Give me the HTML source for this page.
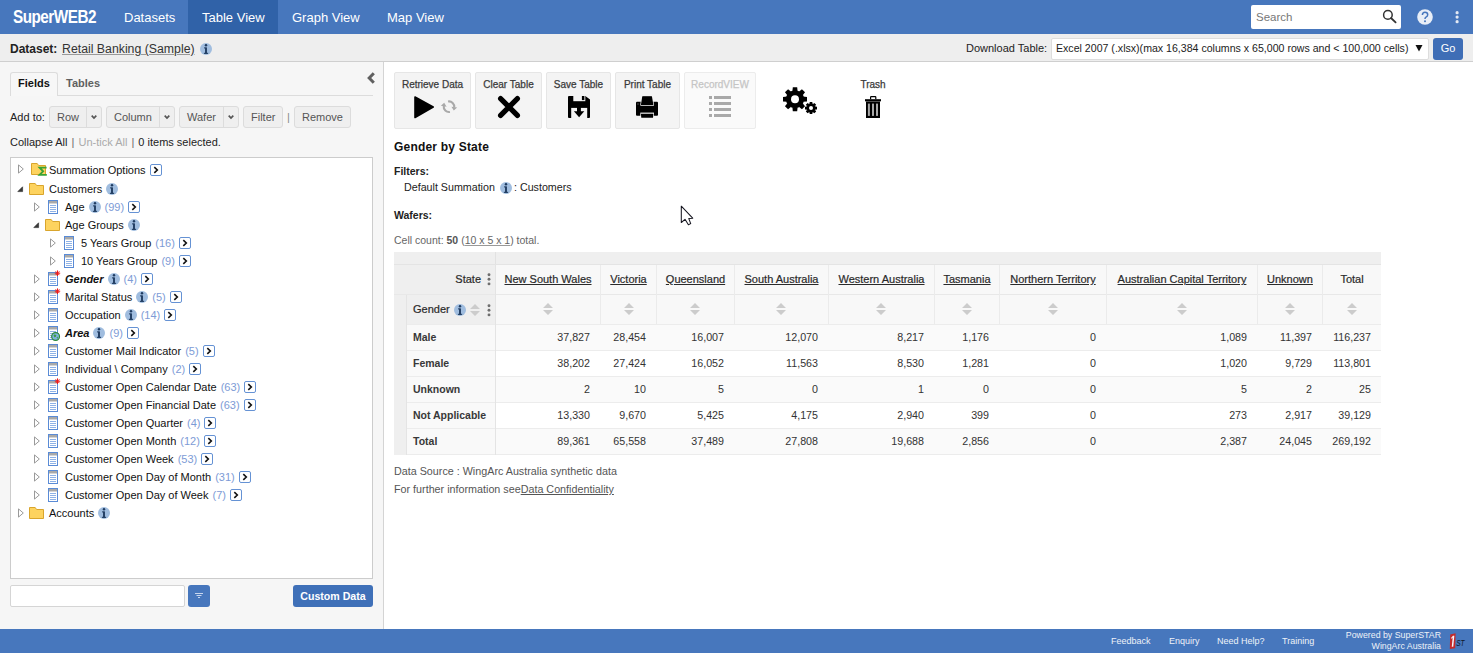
<!DOCTYPE html>
<html><head><meta charset="utf-8">
<style>
*{box-sizing:border-box;margin:0;padding:0}
html,body{width:1473px;height:653px;overflow:hidden;background:#fff;font-family:"Liberation Sans",sans-serif;color:#222}
.abs{position:absolute}
svg{overflow:visible}
#hdr{position:absolute;left:0;top:0;width:1473px;height:34px;background:#4777bd}
#hdr .logo{position:absolute;left:13px;top:7px;font-weight:bold;font-size:18px;color:#fff;letter-spacing:-0.6px;transform:scaleX(0.85);transform-origin:left}
#hdr .nav{position:absolute;top:10px;font-size:13px;color:#fff;white-space:nowrap}
#hdr .act{position:absolute;left:188px;top:0;width:90px;height:34px;background:#3062a8}
#search{position:absolute;left:1251px;top:5px;width:150px;height:24px;background:#fff;border-radius:2px}
#search span{position:absolute;left:5px;top:6px;font-size:11.5px;color:#777}
#dsbar{position:absolute;left:0;top:34px;width:1473px;height:28px;background:#eeeeee;border-bottom:1px solid #cfcfcf}
#dsbar .t{position:absolute;top:7px;font-size:12px;white-space:nowrap}
#left{position:absolute;left:0;top:62px;width:384px;height:567px;background:#f6f6f6;border-right:1px solid #d4d4d4}
#right{position:absolute;left:384px;top:62px;width:1089px;height:567px;background:#fff}
#foot{position:absolute;left:0;top:629px;width:1473px;height:24px;background:#4777bd}
.btn{position:absolute;height:22px;background:#efefef;border:1px solid #dcdcdc;border-radius:3px;font-size:11px;color:#555;line-height:21px}
.tree{position:absolute;left:10px;top:157px;width:363px;height:422px;background:#fff;border:1px solid #cccccc}
.row{position:absolute;height:18px;line-height:18px;font-size:11px;white-space:nowrap;color:#111}
.tbtn{position:absolute;top:72px;height:57px;background:#f4f4f4;border:1px solid #e6e6e6;border-radius:2px}
.tbtn.dis{background:#fafafa;border-color:#ececec}
.tl{position:absolute;left:0;right:0;top:6px;text-align:center;font-size:10px;color:#3a3a3a;white-space:nowrap;-webkit-text-stroke:0.25px currentColor}
.dis .tl{color:#c5c5c5}
.th{height:29px;line-height:29px;font-size:11px;color:#2a2a2a;white-space:nowrap;-webkit-text-stroke:0.2px currentColor}
.td{height:25px;line-height:25px;font-size:10.7px;color:#333;white-space:nowrap}
.lab{color:#383838;font-weight:bold;font-size:10.5px}
.kebab{width:4px;height:13px}
.sort{width:10px;height:12px;background:#0000}
.fl{top:7px;font-size:9px;color:#eef2f8;white-space:nowrap}
.cnt{color:#7d9bd6;margin-left:4px}
.info{display:inline-block;width:12px;height:12px;margin-left:4px;vertical-align:-2px}
.info svg{display:block}
.arr{display:inline-block;width:12px;height:12px;margin-left:4px;vertical-align:-2px}
.arr svg{display:block}
.split{position:absolute;top:0;width:1px;height:20px;background:#dcdcdc}
.chev{position:absolute;top:8px;width:6px;height:4px;background:none}
</style></head>
<body>
<div id="hdr">
  <div class="logo">SuperWEB2</div>
  <div class="act"></div>
  <div class="nav" style="left:124px">Datasets</div>
  <div class="nav" style="left:202px">Table View</div>
  <div class="nav" style="left:292px">Graph View</div>
  <div class="nav" style="left:387px">Map View</div>
  <div id="search"><span>Search</span></div>
  <svg class="abs" style="left:1382px;top:10px" width="16" height="16" viewBox="0 0 16 16"><circle cx="5.9" cy="4.9" r="4.3" fill="none" stroke="#333" stroke-width="1.5"/><path d="M9 8 L13.6 12.4" stroke="#333" stroke-width="1.8" stroke-linecap="round"/></svg>
  <svg class="abs" style="left:1417px;top:9px" width="16" height="16" viewBox="0 0 16 16"><circle cx="8" cy="8" r="7.8" fill="#e8eef7"/><path d="M5.4 6 Q5.4 3.3 8 3.3 Q10.7 3.3 10.7 5.8 Q10.7 7.3 9 8.2 Q8 8.8 8 10" fill="none" stroke="#4777bd" stroke-width="1.5"/><circle cx="8" cy="12.3" r="1" fill="#4777bd"/></svg>
  <svg class="abs" style="left:1455px;top:10px" width="5" height="15" viewBox="0 0 5 15"><circle cx="2.1" cy="2.7" r="1.6" fill="#e4eaf4"/><circle cx="2.1" cy="7.1" r="1.6" fill="#e4eaf4"/><circle cx="2.1" cy="11.7" r="1.6" fill="#e4eaf4"/></svg>

</div>
<div id="dsbar">
  <div class="t" style="left:10px;top:8px;font-weight:bold">Dataset:</div>
  <div class="t" style="left:62px;top:8px;font-size:12.3px;color:#333;text-decoration:underline;text-decoration-color:#999">Retail Banking (Sample)</div>
  <div class="t" style="left:966px;top:8px;font-size:11px;color:#222">Download Table:</div>
  <svg class="abs" style="left:200px;top:9px" width="12" height="12" viewBox="0 0 12 12"><circle cx="6" cy="6" r="6" fill="#a0bddf"/><rect x="5.05" y="4.4" width="1.9" height="6" fill="#1f3b60"/><rect x="3.9" y="9.8" width="4.2" height="1.1" fill="#1f3b60"/><rect x="4.0" y="4.4" width="1.5" height="1" fill="#1f3b60"/><circle cx="6" cy="2.3" r="1.2" fill="#1f3b60"/></svg>
  <div class="abs" style="left:1051px;top:4px;width:378px;height:22px;background:#fff;border:1px solid #dddddd;border-radius:2px"></div>
  <div class="t" style="left:1056px;top:8px;font-size:10.6px;color:#222">Excel 2007 (.xlsx)(max 16,384 columns x 65,000 rows and &lt; 100,000 cells)</div>
  <svg class="abs" style="left:1415px;top:10px" width="8" height="8" viewBox="0 0 8 8"><path d="M0.5 1 L7.5 1 L4 7.5 Z" fill="#111"/></svg>
  <div class="abs" style="left:1433px;top:4px;width:30px;height:22px;background:#3f6eb6;border-radius:3px;color:#fff;font-size:11px;line-height:21px;text-align:center">Go</div>

</div>
<div id="left">
  <div class="abs" style="left:10px;top:10px;width:48px;height:24px;border:1px solid #dcdcdc;border-bottom:none;border-radius:3px 3px 0 0;background:#f7f7f7"></div>
  <div class="abs" style="left:57px;top:33px;width:316px;height:1px;background:#dcdcdc"></div>
  
  <div class="abs" style="left:18px;top:15px;font-size:11px;font-weight:bold;color:#111">Fields</div>
  <div class="abs" style="left:66px;top:15px;font-size:11px;font-weight:bold;color:#606060">Tables</div>
  <svg class="abs" style="left:367px;top:10px" width="9" height="12" viewBox="0 0 9 12"><path d="M6.8 1.3 L2.2 6 L6.8 10.7" fill="none" stroke="#606060" stroke-width="3"/></svg>
  <div class="abs" style="left:10px;top:49px;font-size:11px;color:#222">Add to:</div>
  <div class="btn" style="left:49px;top:44px;width:53px"><span style="position:absolute;left:7px">Row</span><span class="split" style="left:36px"></span><svg class="chev" style="left:41px" width="6" height="4" viewBox="0 0 6 4"><path d="M0.7 0.7 L3 3 L5.3 0.7" fill="none" stroke="#555" stroke-width="1.7"/></svg></div>
  <div class="btn" style="left:106px;top:44px;width:69px"><span style="position:absolute;left:7px">Column</span><span class="split" style="left:52px"></span><svg class="chev" style="left:57px" width="6" height="4" viewBox="0 0 6 4"><path d="M0.7 0.7 L3 3 L5.3 0.7" fill="none" stroke="#555" stroke-width="1.7"/></svg></div>
  <div class="btn" style="left:179px;top:44px;width:60px"><span style="position:absolute;left:7px">Wafer</span><span class="split" style="left:43px"></span><svg class="chev" style="left:48px" width="6" height="4" viewBox="0 0 6 4"><path d="M0.7 0.7 L3 3 L5.3 0.7" fill="none" stroke="#555" stroke-width="1.7"/></svg></div>
  <div class="btn" style="left:243px;top:44px;width:40px"><span style="position:absolute;left:7px">Filter</span></div>
  <div class="abs" style="left:287px;top:49px;font-size:11px;color:#888">|</div>
  <div class="btn" style="left:294px;top:44px;width:57px"><span style="position:absolute;left:7px">Remove</span></div>
  <div class="abs" style="left:10px;top:74px;font-size:11px;color:#222;white-space:nowrap">Collapse All <span style="color:#666;margin:0 1px">|</span> <span style="color:#aaa">Un-tick All</span> <span style="color:#666;margin:0 1px">|</span> 0 items selected.</div>
  <div class="tree" style="top:95px"></div>
<svg class="abs" style="left:18px;top:102px" width="7" height="10" viewBox="0 0 7 10"><path d="M0.5 0.9 L5.3 5 L0.5 9.1 Z" fill="none" stroke="#9a9a9a" stroke-width="1"/></svg>
<svg class="abs" style="left:31px;top:101px" width="17" height="14" viewBox="0 0 17 14"><path d="M0.5 0.5 L6.2 0.5 L7.6 2.5 L14.5 2.5 L14.5 11.5 L0.5 11.5 Z" fill="#fdd35f" stroke="#d9a52c" stroke-width="1"/><path d="M15.6 4.6 H8.6 L12.1 8.3 L8.6 11.9 H15.8" fill="none" stroke="#3aa335" stroke-width="1.9"/></svg>
<div class="row" style="left:49px;top:99px"><span>Summation Options</span><span class="arr"><svg width="12" height="12" viewBox="0 0 12 12"><rect x="0.5" y="0.5" width="11" height="11" rx="1.5" fill="#fff" stroke="#6592d4"/><path d="M4.3 3.2 L7.3 6 L4.3 8.8" fill="none" stroke="#111" stroke-width="1.6"/></svg></span></div>
<svg class="abs" style="left:17px;top:124px" width="7" height="7" viewBox="0 0 7 7"><path d="M5.6 0.8 L5.6 5.6 L0.8 5.6 Z" fill="#383838" stroke="#383838" stroke-width="0.7" stroke-linejoin="round"/></svg>
<svg class="abs" style="left:29px;top:121px" width="17" height="14" viewBox="0 0 17 14"><path d="M0.5 0.5 L6.2 0.5 L7.6 2.5 L14.5 2.5 L14.5 11.5 L0.5 11.5 Z" fill="#fdd35f" stroke="#d9a52c" stroke-width="1"/></svg>
<div class="row" style="left:49px;top:118px"><span>Customers</span><span class="info"><svg width="12" height="12" viewBox="0 0 12 12"><circle cx="6" cy="6" r="6" fill="#a0bddf"/><rect x="5.05" y="4.4" width="1.9" height="6" fill="#1f3b60"/><rect x="3.9" y="9.8" width="4.2" height="1.1" fill="#1f3b60"/><rect x="4.0" y="4.4" width="1.5" height="1" fill="#1f3b60"/><circle cx="6" cy="2.3" r="1.2" fill="#1f3b60"/></svg></span></div>
<svg class="abs" style="left:34px;top:140px" width="7" height="10" viewBox="0 0 7 10"><path d="M0.5 0.9 L5.3 5 L0.5 9.1 Z" fill="none" stroke="#9a9a9a" stroke-width="1"/></svg>
<svg class="abs" style="left:48px;top:138px" width="13" height="15" viewBox="0 0 13 15"><rect x="0.5" y="0.5" width="9" height="13" fill="#fff" stroke="#5a8bd6"/><rect x="1" y="1" width="8" height="2.5" fill="#a9a9a9"/><path d="M2 5.5H8M2 7.5H8M2 9.5H8M2 11.5H8" stroke="#8fb2e6" stroke-width="1"/></svg>
<div class="row" style="left:65px;top:136px"><span>Age</span><span class="info"><svg width="12" height="12" viewBox="0 0 12 12"><circle cx="6" cy="6" r="6" fill="#a0bddf"/><rect x="5.05" y="4.4" width="1.9" height="6" fill="#1f3b60"/><rect x="3.9" y="9.8" width="4.2" height="1.1" fill="#1f3b60"/><rect x="4.0" y="4.4" width="1.5" height="1" fill="#1f3b60"/><circle cx="6" cy="2.3" r="1.2" fill="#1f3b60"/></svg></span><span class="cnt">(99)</span><span class="arr"><svg width="12" height="12" viewBox="0 0 12 12"><rect x="0.5" y="0.5" width="11" height="11" rx="1.5" fill="#fff" stroke="#6592d4"/><path d="M4.3 3.2 L7.3 6 L4.3 8.8" fill="none" stroke="#111" stroke-width="1.6"/></svg></span></div>
<svg class="abs" style="left:33px;top:160px" width="7" height="7" viewBox="0 0 7 7"><path d="M5.6 0.8 L5.6 5.6 L0.8 5.6 Z" fill="#383838" stroke="#383838" stroke-width="0.7" stroke-linejoin="round"/></svg>
<svg class="abs" style="left:45px;top:157px" width="17" height="14" viewBox="0 0 17 14"><path d="M0.5 0.5 L6.2 0.5 L7.6 2.5 L14.5 2.5 L14.5 11.5 L0.5 11.5 Z" fill="#fdd35f" stroke="#d9a52c" stroke-width="1"/></svg>
<div class="row" style="left:65px;top:154px"><span>Age Groups</span><span class="info"><svg width="12" height="12" viewBox="0 0 12 12"><circle cx="6" cy="6" r="6" fill="#a0bddf"/><rect x="5.05" y="4.4" width="1.9" height="6" fill="#1f3b60"/><rect x="3.9" y="9.8" width="4.2" height="1.1" fill="#1f3b60"/><rect x="4.0" y="4.4" width="1.5" height="1" fill="#1f3b60"/><circle cx="6" cy="2.3" r="1.2" fill="#1f3b60"/></svg></span></div>
<svg class="abs" style="left:50px;top:176px" width="7" height="10" viewBox="0 0 7 10"><path d="M0.5 0.9 L5.3 5 L0.5 9.1 Z" fill="none" stroke="#9a9a9a" stroke-width="1"/></svg>
<svg class="abs" style="left:64px;top:174px" width="13" height="15" viewBox="0 0 13 15"><rect x="0.5" y="0.5" width="9" height="13" fill="#fff" stroke="#5a8bd6"/><rect x="1" y="1" width="8" height="2.5" fill="#a9a9a9"/><path d="M2 5.5H8M2 7.5H8M2 9.5H8M2 11.5H8" stroke="#8fb2e6" stroke-width="1"/></svg>
<div class="row" style="left:81px;top:172px"><span>5 Years Group</span><span class="cnt">(16)</span><span class="arr"><svg width="12" height="12" viewBox="0 0 12 12"><rect x="0.5" y="0.5" width="11" height="11" rx="1.5" fill="#fff" stroke="#6592d4"/><path d="M4.3 3.2 L7.3 6 L4.3 8.8" fill="none" stroke="#111" stroke-width="1.6"/></svg></span></div>
<svg class="abs" style="left:50px;top:194px" width="7" height="10" viewBox="0 0 7 10"><path d="M0.5 0.9 L5.3 5 L0.5 9.1 Z" fill="none" stroke="#9a9a9a" stroke-width="1"/></svg>
<svg class="abs" style="left:64px;top:192px" width="13" height="15" viewBox="0 0 13 15"><rect x="0.5" y="0.5" width="9" height="13" fill="#fff" stroke="#5a8bd6"/><rect x="1" y="1" width="8" height="2.5" fill="#a9a9a9"/><path d="M2 5.5H8M2 7.5H8M2 9.5H8M2 11.5H8" stroke="#8fb2e6" stroke-width="1"/></svg>
<div class="row" style="left:81px;top:190px"><span>10 Years Group</span><span class="cnt">(9)</span><span class="arr"><svg width="12" height="12" viewBox="0 0 12 12"><rect x="0.5" y="0.5" width="11" height="11" rx="1.5" fill="#fff" stroke="#6592d4"/><path d="M4.3 3.2 L7.3 6 L4.3 8.8" fill="none" stroke="#111" stroke-width="1.6"/></svg></span></div>
<svg class="abs" style="left:34px;top:212px" width="7" height="10" viewBox="0 0 7 10"><path d="M0.5 0.9 L5.3 5 L0.5 9.1 Z" fill="none" stroke="#9a9a9a" stroke-width="1"/></svg>
<svg class="abs" style="left:48px;top:210px" width="13" height="15" viewBox="0 0 13 15"><rect x="0.5" y="0.5" width="9" height="13" fill="#fff" stroke="#5a8bd6"/><rect x="1" y="1" width="8" height="2.5" fill="#a9a9a9"/><path d="M2 5.5H8M2 7.5H8M2 9.5H8M2 11.5H8" stroke="#8fb2e6" stroke-width="1"/><g transform="translate(0,0)"><path d="M9.5 -1.6 V4 M6.8 1.2 H12.2 M7.6 -0.7 L11.4 3.1 M11.4 -0.7 L7.6 3.1" stroke="#f01818" stroke-width="1"/></g></svg>
<div class="row" style="left:65px;top:208px"><span style="font-weight:bold;font-style:italic">Gender</span><span class="info"><svg width="12" height="12" viewBox="0 0 12 12"><circle cx="6" cy="6" r="6" fill="#a0bddf"/><rect x="5.05" y="4.4" width="1.9" height="6" fill="#1f3b60"/><rect x="3.9" y="9.8" width="4.2" height="1.1" fill="#1f3b60"/><rect x="4.0" y="4.4" width="1.5" height="1" fill="#1f3b60"/><circle cx="6" cy="2.3" r="1.2" fill="#1f3b60"/></svg></span><span class="cnt">(4)</span><span class="arr"><svg width="12" height="12" viewBox="0 0 12 12"><rect x="0.5" y="0.5" width="11" height="11" rx="1.5" fill="#fff" stroke="#6592d4"/><path d="M4.3 3.2 L7.3 6 L4.3 8.8" fill="none" stroke="#111" stroke-width="1.6"/></svg></span></div>
<svg class="abs" style="left:34px;top:230px" width="7" height="10" viewBox="0 0 7 10"><path d="M0.5 0.9 L5.3 5 L0.5 9.1 Z" fill="none" stroke="#9a9a9a" stroke-width="1"/></svg>
<svg class="abs" style="left:48px;top:228px" width="13" height="15" viewBox="0 0 13 15"><rect x="0.5" y="0.5" width="9" height="13" fill="#fff" stroke="#5a8bd6"/><rect x="1" y="1" width="8" height="2.5" fill="#a9a9a9"/><path d="M2 5.5H8M2 7.5H8M2 9.5H8M2 11.5H8" stroke="#8fb2e6" stroke-width="1"/><g transform="translate(0,0)"><path d="M9.5 -1.6 V4 M6.8 1.2 H12.2 M7.6 -0.7 L11.4 3.1 M11.4 -0.7 L7.6 3.1" stroke="#f01818" stroke-width="1"/></g></svg>
<div class="row" style="left:65px;top:226px"><span>Marital Status</span><span class="info"><svg width="12" height="12" viewBox="0 0 12 12"><circle cx="6" cy="6" r="6" fill="#a0bddf"/><rect x="5.05" y="4.4" width="1.9" height="6" fill="#1f3b60"/><rect x="3.9" y="9.8" width="4.2" height="1.1" fill="#1f3b60"/><rect x="4.0" y="4.4" width="1.5" height="1" fill="#1f3b60"/><circle cx="6" cy="2.3" r="1.2" fill="#1f3b60"/></svg></span><span class="cnt">(5)</span><span class="arr"><svg width="12" height="12" viewBox="0 0 12 12"><rect x="0.5" y="0.5" width="11" height="11" rx="1.5" fill="#fff" stroke="#6592d4"/><path d="M4.3 3.2 L7.3 6 L4.3 8.8" fill="none" stroke="#111" stroke-width="1.6"/></svg></span></div>
<svg class="abs" style="left:34px;top:248px" width="7" height="10" viewBox="0 0 7 10"><path d="M0.5 0.9 L5.3 5 L0.5 9.1 Z" fill="none" stroke="#9a9a9a" stroke-width="1"/></svg>
<svg class="abs" style="left:48px;top:246px" width="13" height="15" viewBox="0 0 13 15"><rect x="0.5" y="0.5" width="9" height="13" fill="#fff" stroke="#5a8bd6"/><rect x="1" y="1" width="8" height="2.5" fill="#a9a9a9"/><path d="M2 5.5H8M2 7.5H8M2 9.5H8M2 11.5H8" stroke="#8fb2e6" stroke-width="1"/></svg>
<div class="row" style="left:65px;top:244px"><span>Occupation</span><span class="info"><svg width="12" height="12" viewBox="0 0 12 12"><circle cx="6" cy="6" r="6" fill="#a0bddf"/><rect x="5.05" y="4.4" width="1.9" height="6" fill="#1f3b60"/><rect x="3.9" y="9.8" width="4.2" height="1.1" fill="#1f3b60"/><rect x="4.0" y="4.4" width="1.5" height="1" fill="#1f3b60"/><circle cx="6" cy="2.3" r="1.2" fill="#1f3b60"/></svg></span><span class="cnt">(14)</span><span class="arr"><svg width="12" height="12" viewBox="0 0 12 12"><rect x="0.5" y="0.5" width="11" height="11" rx="1.5" fill="#fff" stroke="#6592d4"/><path d="M4.3 3.2 L7.3 6 L4.3 8.8" fill="none" stroke="#111" stroke-width="1.6"/></svg></span></div>
<svg class="abs" style="left:34px;top:266px" width="7" height="10" viewBox="0 0 7 10"><path d="M0.5 0.9 L5.3 5 L0.5 9.1 Z" fill="none" stroke="#9a9a9a" stroke-width="1"/></svg>
<svg class="abs" style="left:48px;top:264px" width="13" height="15" viewBox="0 0 13 15"><rect x="0.5" y="0.5" width="9" height="13" fill="#fff" stroke="#5a8bd6"/><rect x="1" y="1" width="8" height="2.5" fill="#a9a9a9"/><path d="M2 5.5H8M2 7.5H8M2 9.5H8M2 11.5H8" stroke="#8fb2e6" stroke-width="1"/><circle cx="7.6" cy="10.5" r="3.9" fill="#7fb2e0" stroke="#2a8a35" stroke-width="1.2"/><path d="M5.5 9 Q7 8 8.5 9.5 Q8 11 6.5 11.5 Z M8.5 11.5 L10 10.5 L9.5 13 Z" fill="#3a9a40"/></svg>
<div class="row" style="left:65px;top:262px"><span style="font-weight:bold;font-style:italic">Area</span><span class="info"><svg width="12" height="12" viewBox="0 0 12 12"><circle cx="6" cy="6" r="6" fill="#a0bddf"/><rect x="5.05" y="4.4" width="1.9" height="6" fill="#1f3b60"/><rect x="3.9" y="9.8" width="4.2" height="1.1" fill="#1f3b60"/><rect x="4.0" y="4.4" width="1.5" height="1" fill="#1f3b60"/><circle cx="6" cy="2.3" r="1.2" fill="#1f3b60"/></svg></span><span class="cnt">(9)</span><span class="arr"><svg width="12" height="12" viewBox="0 0 12 12"><rect x="0.5" y="0.5" width="11" height="11" rx="1.5" fill="#fff" stroke="#6592d4"/><path d="M4.3 3.2 L7.3 6 L4.3 8.8" fill="none" stroke="#111" stroke-width="1.6"/></svg></span></div>
<svg class="abs" style="left:34px;top:284px" width="7" height="10" viewBox="0 0 7 10"><path d="M0.5 0.9 L5.3 5 L0.5 9.1 Z" fill="none" stroke="#9a9a9a" stroke-width="1"/></svg>
<svg class="abs" style="left:48px;top:282px" width="13" height="15" viewBox="0 0 13 15"><rect x="0.5" y="0.5" width="9" height="13" fill="#fff" stroke="#5a8bd6"/><rect x="1" y="1" width="8" height="2.5" fill="#a9a9a9"/><path d="M2 5.5H8M2 7.5H8M2 9.5H8M2 11.5H8" stroke="#8fb2e6" stroke-width="1"/></svg>
<div class="row" style="left:65px;top:280px"><span>Customer Mail Indicator</span><span class="cnt">(5)</span><span class="arr"><svg width="12" height="12" viewBox="0 0 12 12"><rect x="0.5" y="0.5" width="11" height="11" rx="1.5" fill="#fff" stroke="#6592d4"/><path d="M4.3 3.2 L7.3 6 L4.3 8.8" fill="none" stroke="#111" stroke-width="1.6"/></svg></span></div>
<svg class="abs" style="left:34px;top:302px" width="7" height="10" viewBox="0 0 7 10"><path d="M0.5 0.9 L5.3 5 L0.5 9.1 Z" fill="none" stroke="#9a9a9a" stroke-width="1"/></svg>
<svg class="abs" style="left:48px;top:300px" width="13" height="15" viewBox="0 0 13 15"><rect x="0.5" y="0.5" width="9" height="13" fill="#fff" stroke="#5a8bd6"/><rect x="1" y="1" width="8" height="2.5" fill="#a9a9a9"/><path d="M2 5.5H8M2 7.5H8M2 9.5H8M2 11.5H8" stroke="#8fb2e6" stroke-width="1"/></svg>
<div class="row" style="left:65px;top:298px"><span>Individual \ Company</span><span class="cnt">(2)</span><span class="arr"><svg width="12" height="12" viewBox="0 0 12 12"><rect x="0.5" y="0.5" width="11" height="11" rx="1.5" fill="#fff" stroke="#6592d4"/><path d="M4.3 3.2 L7.3 6 L4.3 8.8" fill="none" stroke="#111" stroke-width="1.6"/></svg></span></div>
<svg class="abs" style="left:34px;top:320px" width="7" height="10" viewBox="0 0 7 10"><path d="M0.5 0.9 L5.3 5 L0.5 9.1 Z" fill="none" stroke="#9a9a9a" stroke-width="1"/></svg>
<svg class="abs" style="left:48px;top:318px" width="13" height="15" viewBox="0 0 13 15"><rect x="0.5" y="0.5" width="9" height="13" fill="#fff" stroke="#5a8bd6"/><rect x="1" y="1" width="8" height="2.5" fill="#a9a9a9"/><path d="M2 5.5H8M2 7.5H8M2 9.5H8M2 11.5H8" stroke="#8fb2e6" stroke-width="1"/><g transform="translate(0,0)"><path d="M9.5 -1.6 V4 M6.8 1.2 H12.2 M7.6 -0.7 L11.4 3.1 M11.4 -0.7 L7.6 3.1" stroke="#f01818" stroke-width="1"/></g></svg>
<div class="row" style="left:65px;top:316px"><span>Customer Open Calendar Date</span><span class="cnt">(63)</span><span class="arr"><svg width="12" height="12" viewBox="0 0 12 12"><rect x="0.5" y="0.5" width="11" height="11" rx="1.5" fill="#fff" stroke="#6592d4"/><path d="M4.3 3.2 L7.3 6 L4.3 8.8" fill="none" stroke="#111" stroke-width="1.6"/></svg></span></div>
<svg class="abs" style="left:34px;top:338px" width="7" height="10" viewBox="0 0 7 10"><path d="M0.5 0.9 L5.3 5 L0.5 9.1 Z" fill="none" stroke="#9a9a9a" stroke-width="1"/></svg>
<svg class="abs" style="left:48px;top:336px" width="13" height="15" viewBox="0 0 13 15"><rect x="0.5" y="0.5" width="9" height="13" fill="#fff" stroke="#5a8bd6"/><rect x="1" y="1" width="8" height="2.5" fill="#a9a9a9"/><path d="M2 5.5H8M2 7.5H8M2 9.5H8M2 11.5H8" stroke="#8fb2e6" stroke-width="1"/></svg>
<div class="row" style="left:65px;top:334px"><span>Customer Open Financial Date</span><span class="cnt">(63)</span><span class="arr"><svg width="12" height="12" viewBox="0 0 12 12"><rect x="0.5" y="0.5" width="11" height="11" rx="1.5" fill="#fff" stroke="#6592d4"/><path d="M4.3 3.2 L7.3 6 L4.3 8.8" fill="none" stroke="#111" stroke-width="1.6"/></svg></span></div>
<svg class="abs" style="left:34px;top:356px" width="7" height="10" viewBox="0 0 7 10"><path d="M0.5 0.9 L5.3 5 L0.5 9.1 Z" fill="none" stroke="#9a9a9a" stroke-width="1"/></svg>
<svg class="abs" style="left:48px;top:354px" width="13" height="15" viewBox="0 0 13 15"><rect x="0.5" y="0.5" width="9" height="13" fill="#fff" stroke="#5a8bd6"/><rect x="1" y="1" width="8" height="2.5" fill="#a9a9a9"/><path d="M2 5.5H8M2 7.5H8M2 9.5H8M2 11.5H8" stroke="#8fb2e6" stroke-width="1"/></svg>
<div class="row" style="left:65px;top:352px"><span>Customer Open Quarter</span><span class="cnt">(4)</span><span class="arr"><svg width="12" height="12" viewBox="0 0 12 12"><rect x="0.5" y="0.5" width="11" height="11" rx="1.5" fill="#fff" stroke="#6592d4"/><path d="M4.3 3.2 L7.3 6 L4.3 8.8" fill="none" stroke="#111" stroke-width="1.6"/></svg></span></div>
<svg class="abs" style="left:34px;top:374px" width="7" height="10" viewBox="0 0 7 10"><path d="M0.5 0.9 L5.3 5 L0.5 9.1 Z" fill="none" stroke="#9a9a9a" stroke-width="1"/></svg>
<svg class="abs" style="left:48px;top:372px" width="13" height="15" viewBox="0 0 13 15"><rect x="0.5" y="0.5" width="9" height="13" fill="#fff" stroke="#5a8bd6"/><rect x="1" y="1" width="8" height="2.5" fill="#a9a9a9"/><path d="M2 5.5H8M2 7.5H8M2 9.5H8M2 11.5H8" stroke="#8fb2e6" stroke-width="1"/></svg>
<div class="row" style="left:65px;top:370px"><span>Customer Open Month</span><span class="cnt">(12)</span><span class="arr"><svg width="12" height="12" viewBox="0 0 12 12"><rect x="0.5" y="0.5" width="11" height="11" rx="1.5" fill="#fff" stroke="#6592d4"/><path d="M4.3 3.2 L7.3 6 L4.3 8.8" fill="none" stroke="#111" stroke-width="1.6"/></svg></span></div>
<svg class="abs" style="left:34px;top:392px" width="7" height="10" viewBox="0 0 7 10"><path d="M0.5 0.9 L5.3 5 L0.5 9.1 Z" fill="none" stroke="#9a9a9a" stroke-width="1"/></svg>
<svg class="abs" style="left:48px;top:390px" width="13" height="15" viewBox="0 0 13 15"><rect x="0.5" y="0.5" width="9" height="13" fill="#fff" stroke="#5a8bd6"/><rect x="1" y="1" width="8" height="2.5" fill="#a9a9a9"/><path d="M2 5.5H8M2 7.5H8M2 9.5H8M2 11.5H8" stroke="#8fb2e6" stroke-width="1"/></svg>
<div class="row" style="left:65px;top:388px"><span>Customer Open Week</span><span class="cnt">(53)</span><span class="arr"><svg width="12" height="12" viewBox="0 0 12 12"><rect x="0.5" y="0.5" width="11" height="11" rx="1.5" fill="#fff" stroke="#6592d4"/><path d="M4.3 3.2 L7.3 6 L4.3 8.8" fill="none" stroke="#111" stroke-width="1.6"/></svg></span></div>
<svg class="abs" style="left:34px;top:410px" width="7" height="10" viewBox="0 0 7 10"><path d="M0.5 0.9 L5.3 5 L0.5 9.1 Z" fill="none" stroke="#9a9a9a" stroke-width="1"/></svg>
<svg class="abs" style="left:48px;top:408px" width="13" height="15" viewBox="0 0 13 15"><rect x="0.5" y="0.5" width="9" height="13" fill="#fff" stroke="#5a8bd6"/><rect x="1" y="1" width="8" height="2.5" fill="#a9a9a9"/><path d="M2 5.5H8M2 7.5H8M2 9.5H8M2 11.5H8" stroke="#8fb2e6" stroke-width="1"/></svg>
<div class="row" style="left:65px;top:406px"><span>Customer Open Day of Month</span><span class="cnt">(31)</span><span class="arr"><svg width="12" height="12" viewBox="0 0 12 12"><rect x="0.5" y="0.5" width="11" height="11" rx="1.5" fill="#fff" stroke="#6592d4"/><path d="M4.3 3.2 L7.3 6 L4.3 8.8" fill="none" stroke="#111" stroke-width="1.6"/></svg></span></div>
<svg class="abs" style="left:34px;top:428px" width="7" height="10" viewBox="0 0 7 10"><path d="M0.5 0.9 L5.3 5 L0.5 9.1 Z" fill="none" stroke="#9a9a9a" stroke-width="1"/></svg>
<svg class="abs" style="left:48px;top:426px" width="13" height="15" viewBox="0 0 13 15"><rect x="0.5" y="0.5" width="9" height="13" fill="#fff" stroke="#5a8bd6"/><rect x="1" y="1" width="8" height="2.5" fill="#a9a9a9"/><path d="M2 5.5H8M2 7.5H8M2 9.5H8M2 11.5H8" stroke="#8fb2e6" stroke-width="1"/></svg>
<div class="row" style="left:65px;top:424px"><span>Customer Open Day of Week</span><span class="cnt">(7)</span><span class="arr"><svg width="12" height="12" viewBox="0 0 12 12"><rect x="0.5" y="0.5" width="11" height="11" rx="1.5" fill="#fff" stroke="#6592d4"/><path d="M4.3 3.2 L7.3 6 L4.3 8.8" fill="none" stroke="#111" stroke-width="1.6"/></svg></span></div>
<svg class="abs" style="left:18px;top:446px" width="7" height="10" viewBox="0 0 7 10"><path d="M0.5 0.9 L5.3 5 L0.5 9.1 Z" fill="none" stroke="#9a9a9a" stroke-width="1"/></svg>
<svg class="abs" style="left:29px;top:445px" width="17" height="14" viewBox="0 0 17 14"><path d="M0.5 0.5 L6.2 0.5 L7.6 2.5 L14.5 2.5 L14.5 11.5 L0.5 11.5 Z" fill="#fdd35f" stroke="#d9a52c" stroke-width="1"/></svg>
<div class="row" style="left:49px;top:442px"><span>Accounts</span><span class="info"><svg width="12" height="12" viewBox="0 0 12 12"><circle cx="6" cy="6" r="6" fill="#a0bddf"/><rect x="5.05" y="4.4" width="1.9" height="6" fill="#1f3b60"/><rect x="3.9" y="9.8" width="4.2" height="1.1" fill="#1f3b60"/><rect x="4.0" y="4.4" width="1.5" height="1" fill="#1f3b60"/><circle cx="6" cy="2.3" r="1.2" fill="#1f3b60"/></svg></span></div>
  <div class="abs" style="left:10px;top:523px;width:175px;height:22px;background:#fff;border:1px solid #d5d5d5;border-radius:2px"></div>
  <div class="abs" style="left:188px;top:523px;width:22px;height:22px;background:#4777bd;border-radius:3px"></div>
  <svg class="abs" style="left:193px;top:529px" width="12" height="10" viewBox="0 0 12 10"><path d="M2 2.5H10M3.5 4.5H8.5M5 6.5H7" stroke="#c9d7ee" stroke-width="1.2"/></svg>
  <div class="abs" style="left:293px;top:523px;width:80px;height:22px;background:#3f70b8;border-radius:3px;color:#fff;font-size:10.6px;font-weight:bold;line-height:22px;text-align:center">Custom Data</div>
</div>
<div id="right"></div>

<div class="tbtn" style="left:394px;width:77px"><div class="tl">Retrieve Data</div></div>
<div class="tbtn" style="left:475px;width:67px"><div class="tl">Clear Table</div></div>
<div class="tbtn" style="left:546px;width:65px"><div class="tl">Save Table</div></div>
<div class="tbtn" style="left:615px;width:65px"><div class="tl">Print Table</div></div>
<div class="tbtn dis" style="left:684px;width:72px"><div class="tl">RecordVIEW</div></div>
<div class="abs" style="left:848px;top:79px;width:50px;text-align:center;font-size:10px;color:#3a3a3a;-webkit-text-stroke:0.25px currentColor">Trash</div>
<!-- play -->
<svg class="abs" style="left:413px;top:96px" width="22" height="23" viewBox="0 0 22 23"><path d="M2 1 L20.2 11 L2 21.5 Z" fill="#000" stroke="#000" stroke-width="1.6" stroke-linejoin="round"/></svg>
<!-- refresh -->
<svg class="abs" style="left:438px;top:97px" width="22" height="20" viewBox="438 97 22 20"><path d="M448.08 101.48 A5.3 5.3 0 0 1 454.25 107.44 M449.92 111.92 A5.3 5.3 0 0 1 443.75 105.96" fill="none" stroke="#a9a9a9" stroke-width="2.1"/><path d="M453.80 110.61 L457.16 107.54 L451.42 106.74 Z M444.20 102.79 L440.84 105.86 L446.58 106.66 Z" fill="#a9a9a9"/></svg>
<!-- X -->
<svg class="abs" style="left:498px;top:96px" width="22" height="22" viewBox="0 0 22 22"><path d="M2.6 2.6 L19.4 19.4 M19.4 2.6 L2.6 19.4" stroke="#000" stroke-width="5.2" stroke-linecap="round"/></svg>
<!-- save -->
<svg class="abs" style="left:568px;top:96px" width="22" height="22" viewBox="0 0 22 22"><path d="M0 1 Q0 0 1 0 L17.3 0 L22 3.6 L22 21 Q22 22 21 22 L1 22 Q0 22 0 21 Z" fill="#000"/><rect x="5.3" y="0" width="12" height="5.2" fill="#f4f4f4"/><rect x="13.9" y="0" width="2.5" height="4.1" fill="#000"/><rect x="3.2" y="11.9" width="16" height="10.1" fill="#f4f4f4"/><path d="M9 11 H12.9 V15.2 H16.3 L11.1 21.2 L5.9 15.2 H9 Z" fill="#000"/></svg>
<!-- printer -->
<svg class="abs" style="left:636px;top:96px" width="22" height="22" viewBox="0 0 22 22"><rect x="0" y="5.8" width="22" height="14" rx="1" fill="#000"/><path d="M6.3 0 L15.9 0 L17.4 9 L4.9 9 Z" fill="#000" stroke="#f4f4f4" stroke-width="1.4" stroke-linejoin="round"/><path d="M6.3 0.3 L15.9 0.3 L17.4 9 L4.9 9 Z" fill="#000"/><rect x="4.3" y="16.6" width="13.7" height="6" fill="#f4f4f4"/><path d="M4.9 17.8 L17.4 17.8 L17.0 21.8 L5.3 21.8 Z" fill="#000"/><circle cx="2" cy="8" r="0.8" fill="#555"/></svg>
<!-- list -->
<svg class="abs" style="left:709px;top:96px" width="23" height="21" viewBox="0 0 23 21"><g fill="#a9a9a9"><rect x="0" y="0" width="3" height="3"/><rect x="5" y="0" width="17" height="3"/><rect x="0" y="6" width="3" height="3"/><rect x="5" y="6" width="17" height="3"/><rect x="0" y="12" width="3" height="3"/><rect x="5" y="12" width="17" height="3"/><rect x="0" y="18" width="3" height="3"/><rect x="5" y="18" width="17" height="3"/></g></svg>
<!-- gears -->
<svg class="abs" style="left:783px;top:87px" width="36" height="29" viewBox="0 0 36 29"><g transform="translate(12,12.2)"><g fill="#000"><circle r="9"/><path d="M-2.2 -12 H2.2 L2.6 -8 H-2.6 Z"/><path d="M-2.2 -12 H2.2 L2.6 -8 H-2.6 Z" transform="rotate(45)"/><path d="M-2.2 -12 H2.2 L2.6 -8 H-2.6 Z" transform="rotate(90)"/><path d="M-2.2 -12 H2.2 L2.6 -8 H-2.6 Z" transform="rotate(135)"/><path d="M-2.2 -12 H2.2 L2.6 -8 H-2.6 Z" transform="rotate(180)"/><path d="M-2.2 -12 H2.2 L2.6 -8 H-2.6 Z" transform="rotate(225)"/><path d="M-2.2 -12 H2.2 L2.6 -8 H-2.6 Z" transform="rotate(270)"/><path d="M-2.2 -12 H2.2 L2.6 -8 H-2.6 Z" transform="rotate(315)"/></g><circle r="4" fill="#fff"/></g><g transform="translate(28,21.1)"><g fill="#000"><circle r="4.6"/><path d="M-1.3 -6 H1.3 L1.5 -4 H-1.5 Z"/><path d="M-1.3 -6 H1.3 L1.5 -4 H-1.5 Z" transform="rotate(45)"/><path d="M-1.3 -6 H1.3 L1.5 -4 H-1.5 Z" transform="rotate(90)"/><path d="M-1.3 -6 H1.3 L1.5 -4 H-1.5 Z" transform="rotate(135)"/><path d="M-1.3 -6 H1.3 L1.5 -4 H-1.5 Z" transform="rotate(180)"/><path d="M-1.3 -6 H1.3 L1.5 -4 H-1.5 Z" transform="rotate(225)"/><path d="M-1.3 -6 H1.3 L1.5 -4 H-1.5 Z" transform="rotate(270)"/><path d="M-1.3 -6 H1.3 L1.5 -4 H-1.5 Z" transform="rotate(315)"/></g><circle r="2" fill="#fff"/></g></svg>
<!-- trash -->
<svg class="abs" style="left:865px;top:96px" width="16" height="22" viewBox="0 0 16 22"><path d="M5.6 3.3 V1.2 Q5.6 0.6 6.2 0.6 H10.2 Q10.8 0.6 10.8 1.2 V3.3" fill="none" stroke="#000" stroke-width="1.2"/><rect x="0" y="3.2" width="16" height="2" fill="#000"/><rect x="0.5" y="5" width="15" height="0.6" fill="#555"/><rect x="1" y="5.6" width="14" height="16.4" fill="#000"/><g fill="#a8a8a8"><rect x="2.9" y="7.6" width="2" height="12.3"/><rect x="7" y="7.6" width="2" height="12.3"/><rect x="11" y="7.6" width="2" height="12.3"/></g></svg>

<div class="abs" style="left:394px;top:140px;font-size:12px;font-weight:bold;color:#111;letter-spacing:0.2px">Gender by State</div>
<div class="abs" style="left:394px;top:165px;font-size:10.5px;font-weight:bold;color:#222">Filters:</div>
<div class="abs" style="left:404px;top:181px;font-size:10.7px;color:#222;white-space:nowrap">Default Summation</div>
<svg class="abs" style="left:500px;top:182px" width="12" height="12" viewBox="0 0 12 12"><circle cx="6" cy="6" r="6" fill="#a0bddf"/><rect x="5.05" y="4.4" width="1.9" height="6" fill="#1f3b60"/><rect x="3.9" y="9.8" width="4.2" height="1.1" fill="#1f3b60"/><rect x="4.0" y="4.4" width="1.5" height="1" fill="#1f3b60"/><circle cx="6" cy="2.3" r="1.2" fill="#1f3b60"/></svg>
<div class="abs" style="left:514px;top:181px;font-size:10.7px;color:#222;white-space:nowrap">: Customers</div>
<div class="abs" style="left:394px;top:209px;font-size:10.5px;font-weight:bold;color:#222">Wafers:</div>
<div class="abs" style="left:394px;top:234px;font-size:10.5px;color:#666;white-space:nowrap">Cell count: <b style="color:#555">50</b> (<u style="text-decoration-color:#999">10 x 5 x 1</u>) total.</div>
<div class="abs" style="left:394px;top:465px;font-size:10.75px;color:#555;white-space:nowrap">Data Source : WingArc Australia synthetic data</div>
<div class="abs" style="left:394px;top:483px;font-size:10.75px;color:#555;white-space:nowrap">For further information see<u>Data Confidentiality</u></div>
<!--TABLE-->
<div class="abs" style="left:394px;top:252px;width:987px;height:12px;background:#efefef"></div>
<div class="abs" style="left:394px;top:264px;width:987px;height:1px;background:#e4e4e4"></div>
<div class="abs" style="left:495px;top:252px;width:1px;height:12px;background:#e2e2e2"></div>
<div class="abs" style="left:394px;top:265px;width:101px;height:29px;background:#efefef"></div>
<div class="abs" style="left:496px;top:265px;width:885px;height:29px;background:#f8f8f8"></div>
<div class="abs" style="left:394px;top:294px;width:987px;height:1px;background:#e8e8e8"></div>
<div class="abs th" style="left:394px;top:265px;width:87px;text-align:right">State</div>
<div class="abs kebab" style="left:487px;top:272px"><svg width="4" height="13" viewBox="0 0 4 13"><circle cx="2" cy="1.8" r="1.45" fill="#6e6e6e"/><circle cx="2" cy="6.3" r="1.45" fill="#6e6e6e"/><circle cx="2" cy="10.9" r="1.45" fill="#6e6e6e"/></svg></div>
<div class="abs" style="left:394px;top:295px;width:12px;height:160px;background:#efefef"></div>
<div class="abs" style="left:406px;top:295px;width:1px;height:159px;background:#e4e4e4"></div>
<div class="abs" style="left:407px;top:295px;width:88px;height:29px;background:#efefef"></div>
<div class="abs" style="left:496px;top:295px;width:885px;height:29px;background:#f8f8f8"></div>
<div class="abs th" style="left:413px;top:295px">Gender</div>
<svg class="abs" style="left:454px;top:304px" width="12" height="12" viewBox="0 0 12 12"><circle cx="6" cy="6" r="6" fill="#a0bddf"/><rect x="5.05" y="4.4" width="1.9" height="6" fill="#1f3b60"/><rect x="3.9" y="9.8" width="4.2" height="1.1" fill="#1f3b60"/><rect x="4.0" y="4.4" width="1.5" height="1" fill="#1f3b60"/><circle cx="6" cy="2.3" r="1.2" fill="#1f3b60"/></svg>
<div class="abs sort" style="left:470px;top:303px"><svg width="10" height="13" viewBox="0 0 10 13"><path d="M0 5 L5 0 L10 5 Z M0 7 L10 7 L5 12 Z" fill="#cccccc"/></svg></div>
<div class="abs kebab" style="left:487px;top:303px"><svg width="4" height="13" viewBox="0 0 4 13"><circle cx="2" cy="1.8" r="1.45" fill="#6e6e6e"/><circle cx="2" cy="6.3" r="1.45" fill="#6e6e6e"/><circle cx="2" cy="10.9" r="1.45" fill="#6e6e6e"/></svg></div>
<div class="abs th" style="left:496px;top:265px;width:104px;text-align:center"><span style="text-decoration:underline">New South Wales</span></div>
<div class="abs sort" style="left:543px;top:302px"><svg width="10" height="13" viewBox="0 0 10 13"><path d="M0 5 L5 0 L10 5 Z M0 7 L10 7 L5 12 Z" fill="#cccccc"/></svg></div>
<div class="abs th" style="left:601px;top:265px;width:55px;text-align:center"><span style="text-decoration:underline">Victoria</span></div>
<div class="abs sort" style="left:624px;top:302px"><svg width="10" height="13" viewBox="0 0 10 13"><path d="M0 5 L5 0 L10 5 Z M0 7 L10 7 L5 12 Z" fill="#cccccc"/></svg></div>
<div class="abs th" style="left:657px;top:265px;width:77px;text-align:center"><span style="text-decoration:underline">Queensland</span></div>
<div class="abs sort" style="left:690px;top:302px"><svg width="10" height="13" viewBox="0 0 10 13"><path d="M0 5 L5 0 L10 5 Z M0 7 L10 7 L5 12 Z" fill="#cccccc"/></svg></div>
<div class="abs th" style="left:735px;top:265px;width:93px;text-align:center"><span style="text-decoration:underline">South Australia</span></div>
<div class="abs sort" style="left:776px;top:302px"><svg width="10" height="13" viewBox="0 0 10 13"><path d="M0 5 L5 0 L10 5 Z M0 7 L10 7 L5 12 Z" fill="#cccccc"/></svg></div>
<div class="abs th" style="left:829px;top:265px;width:105px;text-align:center"><span style="text-decoration:underline">Western Australia</span></div>
<div class="abs sort" style="left:876px;top:302px"><svg width="10" height="13" viewBox="0 0 10 13"><path d="M0 5 L5 0 L10 5 Z M0 7 L10 7 L5 12 Z" fill="#cccccc"/></svg></div>
<div class="abs th" style="left:935px;top:265px;width:64px;text-align:center"><span style="text-decoration:underline">Tasmania</span></div>
<div class="abs sort" style="left:962px;top:302px"><svg width="10" height="13" viewBox="0 0 10 13"><path d="M0 5 L5 0 L10 5 Z M0 7 L10 7 L5 12 Z" fill="#cccccc"/></svg></div>
<div class="abs th" style="left:1000px;top:265px;width:106px;text-align:center"><span style="text-decoration:underline">Northern Territory</span></div>
<div class="abs sort" style="left:1048px;top:302px"><svg width="10" height="13" viewBox="0 0 10 13"><path d="M0 5 L5 0 L10 5 Z M0 7 L10 7 L5 12 Z" fill="#cccccc"/></svg></div>
<div class="abs th" style="left:1107px;top:265px;width:150px;text-align:center"><span style="text-decoration:underline">Australian Capital Territory</span></div>
<div class="abs sort" style="left:1177px;top:302px"><svg width="10" height="13" viewBox="0 0 10 13"><path d="M0 5 L5 0 L10 5 Z M0 7 L10 7 L5 12 Z" fill="#cccccc"/></svg></div>
<div class="abs th" style="left:1258px;top:265px;width:64px;text-align:center"><span style="text-decoration:underline">Unknown</span></div>
<div class="abs sort" style="left:1285px;top:302px"><svg width="10" height="13" viewBox="0 0 10 13"><path d="M0 5 L5 0 L10 5 Z M0 7 L10 7 L5 12 Z" fill="#cccccc"/></svg></div>
<div class="abs th" style="left:1323px;top:265px;width:58px;text-align:center"><span>Total</span></div>
<div class="abs sort" style="left:1347px;top:302px"><svg width="10" height="13" viewBox="0 0 10 13"><path d="M0 5 L5 0 L10 5 Z M0 7 L10 7 L5 12 Z" fill="#cccccc"/></svg></div>
<div class="abs" style="left:600px;top:265px;width:1px;height:59px;background:#ebebeb"></div>
<div class="abs" style="left:656px;top:265px;width:1px;height:59px;background:#ebebeb"></div>
<div class="abs" style="left:734px;top:265px;width:1px;height:59px;background:#ebebeb"></div>
<div class="abs" style="left:828px;top:265px;width:1px;height:59px;background:#ebebeb"></div>
<div class="abs" style="left:934px;top:265px;width:1px;height:59px;background:#ebebeb"></div>
<div class="abs" style="left:999px;top:265px;width:1px;height:59px;background:#ebebeb"></div>
<div class="abs" style="left:1106px;top:265px;width:1px;height:59px;background:#ebebeb"></div>
<div class="abs" style="left:1257px;top:265px;width:1px;height:59px;background:#ebebeb"></div>
<div class="abs" style="left:1322px;top:265px;width:1px;height:59px;background:#ebebeb"></div>
<div class="abs" style="left:406px;top:324px;width:975px;height:1px;background:#ececec"></div>
<div class="abs" style="left:407px;top:325px;width:88px;height:25px;background:#f9f9f9"></div>
<div class="abs" style="left:496px;top:325px;width:885px;height:25px;background:#fafafa"></div>
<div class="abs td lab" style="left:413px;top:325px">Male</div>
<div class="abs td" style="left:496px;top:325px;width:94px;text-align:right">37,827</div>
<div class="abs td" style="left:601px;top:325px;width:45px;text-align:right">28,454</div>
<div class="abs td" style="left:657px;top:325px;width:67px;text-align:right">16,007</div>
<div class="abs td" style="left:735px;top:325px;width:83px;text-align:right">12,070</div>
<div class="abs td" style="left:829px;top:325px;width:95px;text-align:right">8,217</div>
<div class="abs td" style="left:935px;top:325px;width:54px;text-align:right">1,176</div>
<div class="abs td" style="left:1000px;top:325px;width:96px;text-align:right">0</div>
<div class="abs td" style="left:1107px;top:325px;width:140px;text-align:right">1,089</div>
<div class="abs td" style="left:1258px;top:325px;width:54px;text-align:right">11,397</div>
<div class="abs td" style="left:1323px;top:325px;width:48px;text-align:right">116,237</div>
<div class="abs" style="left:406px;top:350px;width:975px;height:1px;background:#ececec"></div>
<div class="abs" style="left:407px;top:351px;width:88px;height:25px;background:#f9f9f9"></div>
<div class="abs" style="left:496px;top:351px;width:885px;height:25px;background:#ffffff"></div>
<div class="abs td lab" style="left:413px;top:351px">Female</div>
<div class="abs td" style="left:496px;top:351px;width:94px;text-align:right">38,202</div>
<div class="abs td" style="left:601px;top:351px;width:45px;text-align:right">27,424</div>
<div class="abs td" style="left:657px;top:351px;width:67px;text-align:right">16,052</div>
<div class="abs td" style="left:735px;top:351px;width:83px;text-align:right">11,563</div>
<div class="abs td" style="left:829px;top:351px;width:95px;text-align:right">8,530</div>
<div class="abs td" style="left:935px;top:351px;width:54px;text-align:right">1,281</div>
<div class="abs td" style="left:1000px;top:351px;width:96px;text-align:right">0</div>
<div class="abs td" style="left:1107px;top:351px;width:140px;text-align:right">1,020</div>
<div class="abs td" style="left:1258px;top:351px;width:54px;text-align:right">9,729</div>
<div class="abs td" style="left:1323px;top:351px;width:48px;text-align:right">113,801</div>
<div class="abs" style="left:406px;top:376px;width:975px;height:1px;background:#ececec"></div>
<div class="abs" style="left:407px;top:377px;width:88px;height:25px;background:#f9f9f9"></div>
<div class="abs" style="left:496px;top:377px;width:885px;height:25px;background:#fafafa"></div>
<div class="abs td lab" style="left:413px;top:377px">Unknown</div>
<div class="abs td" style="left:496px;top:377px;width:94px;text-align:right">2</div>
<div class="abs td" style="left:601px;top:377px;width:45px;text-align:right">10</div>
<div class="abs td" style="left:657px;top:377px;width:67px;text-align:right">5</div>
<div class="abs td" style="left:735px;top:377px;width:83px;text-align:right">0</div>
<div class="abs td" style="left:829px;top:377px;width:95px;text-align:right">1</div>
<div class="abs td" style="left:935px;top:377px;width:54px;text-align:right">0</div>
<div class="abs td" style="left:1000px;top:377px;width:96px;text-align:right">0</div>
<div class="abs td" style="left:1107px;top:377px;width:140px;text-align:right">5</div>
<div class="abs td" style="left:1258px;top:377px;width:54px;text-align:right">2</div>
<div class="abs td" style="left:1323px;top:377px;width:48px;text-align:right">25</div>
<div class="abs" style="left:406px;top:402px;width:975px;height:1px;background:#ececec"></div>
<div class="abs" style="left:407px;top:403px;width:88px;height:25px;background:#f9f9f9"></div>
<div class="abs" style="left:496px;top:403px;width:885px;height:25px;background:#ffffff"></div>
<div class="abs td lab" style="left:413px;top:403px">Not Applicable</div>
<div class="abs td" style="left:496px;top:403px;width:94px;text-align:right">13,330</div>
<div class="abs td" style="left:601px;top:403px;width:45px;text-align:right">9,670</div>
<div class="abs td" style="left:657px;top:403px;width:67px;text-align:right">5,425</div>
<div class="abs td" style="left:735px;top:403px;width:83px;text-align:right">4,175</div>
<div class="abs td" style="left:829px;top:403px;width:95px;text-align:right">2,940</div>
<div class="abs td" style="left:935px;top:403px;width:54px;text-align:right">399</div>
<div class="abs td" style="left:1000px;top:403px;width:96px;text-align:right">0</div>
<div class="abs td" style="left:1107px;top:403px;width:140px;text-align:right">273</div>
<div class="abs td" style="left:1258px;top:403px;width:54px;text-align:right">2,917</div>
<div class="abs td" style="left:1323px;top:403px;width:48px;text-align:right">39,129</div>
<div class="abs" style="left:406px;top:428px;width:975px;height:1px;background:#ececec"></div>
<div class="abs" style="left:407px;top:429px;width:88px;height:25px;background:#f9f9f9"></div>
<div class="abs" style="left:496px;top:429px;width:885px;height:25px;background:#fafafa"></div>
<div class="abs td lab" style="left:413px;top:429px">Total</div>
<div class="abs td" style="left:496px;top:429px;width:94px;text-align:right">89,361</div>
<div class="abs td" style="left:601px;top:429px;width:45px;text-align:right">65,558</div>
<div class="abs td" style="left:657px;top:429px;width:67px;text-align:right">37,489</div>
<div class="abs td" style="left:735px;top:429px;width:83px;text-align:right">27,808</div>
<div class="abs td" style="left:829px;top:429px;width:95px;text-align:right">19,688</div>
<div class="abs td" style="left:935px;top:429px;width:54px;text-align:right">2,856</div>
<div class="abs td" style="left:1000px;top:429px;width:96px;text-align:right">0</div>
<div class="abs td" style="left:1107px;top:429px;width:140px;text-align:right">2,387</div>
<div class="abs td" style="left:1258px;top:429px;width:54px;text-align:right">24,045</div>
<div class="abs td" style="left:1323px;top:429px;width:48px;text-align:right">269,192</div>
<div class="abs" style="left:406px;top:454px;width:975px;height:1px;background:#ececec"></div>
<div class="abs" style="left:406px;top:324px;width:1px;height:131px;background:#e4e4e4"></div>
<div class="abs" style="left:495px;top:265px;width:1px;height:190px;background:#e4e4e4"></div>
<!--/TABLE-->
<div id="foot">
  <div class="abs fl" style="left:1111px">Feedback</div>
  <div class="abs fl" style="left:1169px">Enquiry</div>
  <div class="abs fl" style="left:1217px">Need Help?</div>
  <div class="abs fl" style="left:1282px">Training</div>
  <div class="abs" style="left:1300px;top:1px;width:141px;text-align:right;font-size:8.8px;line-height:10.8px;color:#eef2f8">Powered by SuperSTAR<br>WingArc Australia</div>
  <svg class="abs" style="left:1449px;top:4px" width="17" height="17" viewBox="0 0 17 17"><path d="M1.2 1.4 L6.6 0.2 L6.2 15.2 L0.8 16 Z" fill="#c42a2a"/><path d="M4.6 2.8 L3.5 13.8" stroke="#f4f8ff" stroke-width="1.5"/><path d="M4.5 3 L2.4 5.4" stroke="#f4f8ff" stroke-width="1.1"/><text x="0" y="0" transform="translate(7.2,13) scale(0.68,1)" font-family="Liberation Sans" font-style="italic" font-size="9.6" fill="#0d1628">ST</text></svg>
</div>
<svg class="abs" style="left:678px;top:203px" width="18" height="26" viewBox="678 203 18 26"><path d="M681.3 206.2 L681.3 222.5 L685 219.3 L688.4 224.8 L690.7 223.6 L688.8 218.6 L692.7 218.2 Z" fill="#fff" stroke="#161620" stroke-width="1.05" stroke-linejoin="round"/></svg>
</body></html>
